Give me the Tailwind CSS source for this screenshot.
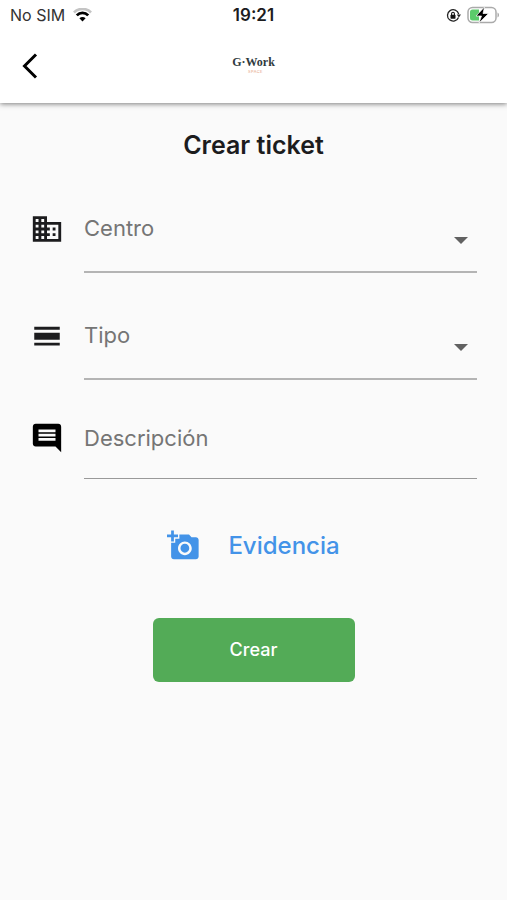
<!DOCTYPE html>
<html lang="es">
<head>
<meta charset="utf-8">
<meta name="viewport" content="width=device-width, initial-scale=1">
<title>Crear ticket</title>
<script src="https://cdn.jsdelivr.net/npm/@tailwindcss/browser@4"></script>
</head>
<body class="min-h-screen bg-[#fafafa] font-['Inter',sans-serif] text-[#1c1c1e]">
<header class="relative bg-white shadow-[0_1px_5px_rgba(0,0,0,0.5)]">
  <div class="grid h-[30px] grid-cols-3 items-center px-[10px]">
    <div class="flex items-center gap-2 text-base text-[#333]">
      <span>No SIM</span>
      <svg class="h-[14px] w-[19px]" viewBox="0 0 19 14" fill="none" aria-label="Wi-Fi">
        <path d="M1 4.500C5.500-.3 13.500-.3 18 4.500" stroke="#c4c4c4" stroke-width="2.600"/>
        <path d="M3.800 7.400C7 4 12 4 15.200 7.400" stroke="#000" stroke-width="2.800"/>
        <path d="M9.500 13.500 6.400 10.300C8.200 8.600 10.800 8.600 12.600 10.300Z" fill="#000"/>
      </svg>
    </div>
    <time class="text-center text-[17px] leading-6 font-semibold">19:21</time>
    <div class="flex items-center justify-end gap-[6px] -mr-[3px]">
      <svg class="size-[15px]" viewBox="0 0 15 15" fill="none" aria-label="Bloqueo de rotación">
        <path d="M12.500 9.500A5.700 5.700 0 1 1 12.700 6" stroke="#222" stroke-width="1.300"/>
        <path d="M10.800 6.500h4.200L12.900 9.500Z" fill="#222"/>
        <rect x="4.500" y="6.800" width="5" height="3.900" rx=".6" fill="#111"/>
        <path d="M5.600 7V5.700a1.400 1.400 0 0 1 2.800 0V7" stroke="#111" stroke-width="1.100"/>
      </svg>
      <svg class="h-[18px] w-[33px]" viewBox="0 0 33 18" aria-label="Batería cargando">
        <rect x="1" y="1.500" width="28" height="15" rx="4.500" fill="#fff" stroke="#aaa" stroke-width="1.500"/>
        <path d="M5.500 3.500H12v11H5.500a2.500 2.500 0 0 1-2.500-2.500V6a2.500 2.500 0 0 1 2.500-2.500Z" fill="#5bcb6b"/>
        <path d="M30.500 6.500c2 .8 2 4.200 0 5Z" fill="#aaa"/>
        <path d="M17.500 1 9 10h5.500L12 17l9.500-9.500H16Z" fill="#000" stroke="#fff" stroke-width=".7"/>
      </svg>
    </div>
  </div>
  <div class="grid h-[73px] grid-cols-3 items-center px-[14px]">
    <button type="button" aria-label="Volver" class="-mt-[2px] flex size-8 items-center justify-center">
      <svg class="h-[28px] w-[18px]" viewBox="0 0 18 28" fill="none" stroke="#000" stroke-width="3"><path d="M15 2.500 3.500 14 15 25.500"/></svg>
    </button>
    <div class="flex flex-col items-center pb-[5px] font-['Liberation_Serif',serif]">
      <span class="text-xs leading-[14px] font-bold text-[#2f3a40]">G·Work</span>
      <span class="pl-1 font-['Inter',sans-serif] text-[4px] leading-[5px] tracking-widest text-[#e5a585]">SPACE</span>
    </div>
  </div>
</header>
<main class="px-[30px] pt-[26px]">
  <h1 class="text-center text-[25px] leading-8 font-semibold">Crear ticket</h1>
  <form>
    <div class="mt-8 flex gap-5">
      <label for="centro" class="mt-[19px] shrink-0" aria-label="Centro">
        <svg class="size-[34px]" viewBox="0 0 24 24" fill="#1c1c1e"><path d="M12 7V3H2v18h20V7H12zM6 19H4v-2h2v2zm0-4H4v-2h2v2zm0-4H4V9h2v2zm0-4H4V5h2v2zm4 12H8v-2h2v2zm0-4H8v-2h2v2zm0-4H8V9h2v2zm0-4H8V5h2v2zm10 12h-8v-2h2v-2h-2v-2h2v-2h-2V9h8v10zm-2-8h-2v2h2v-2zm0 4h-2v2h2v-2z"/></svg>
      </label>
      <div class="relative flex-1">
        <select id="centro" class="h-[80px] w-full appearance-none border-b-2 border-[#b4b4b4] bg-transparent pb-[8px] text-[22px] text-[#757575] outline-none"><option>Centro</option></select>
        <svg class="pointer-events-none absolute right-[9px] bottom-[29px] h-[7px] w-[14px]" viewBox="0 0 14 7" fill="#616161"><path d="M0 0h14L7 7Z"/></svg>
      </div>
    </div>
    <div class="mt-[27px] flex gap-5">
      <label for="tipo" class="mt-[19px] shrink-0" aria-label="Tipo">
        <svg class="size-[34px]" viewBox="0 0 24 24" fill="#1c1c1e"><path d="M3 5.500h18v2H3zM3 9.700h18v4.900H3zM3 16.700h18v2H3z"/></svg>
      </label>
      <div class="relative flex-1">
        <select id="tipo" class="h-[80px] w-full appearance-none border-b-2 border-[#b4b4b4] bg-transparent pb-[8px] text-[22px] text-[#757575] outline-none"><option>Tipo</option></select>
        <svg class="pointer-events-none absolute right-[9px] bottom-[29px] h-[7px] w-[14px]" viewBox="0 0 14 7" fill="#616161"><path d="M0 0h14L7 7Z"/></svg>
      </div>
    </div>
    <div class="mt-[17px] flex items-center gap-5">
      <label for="descripcion" class="shrink-0" aria-label="Descripción">
        <svg class="size-[34px]" viewBox="0 0 24 24" fill="#000"><path d="M21.990 4c0-1.100-.89-2-1.990-2H4c-1.100 0-2 .9-2 2v12c0 1.100.9 2 2 2h14l4 4-.01-18zM18 14H6v-2h12v2zm0-3H6V9h12v2zm0-3H6V6h12v2z"/></svg>
      </label>
      <input id="descripcion" type="text" placeholder="Descripción" class="h-[82px] min-w-0 flex-1 border-b border-[#999] bg-transparent text-[22px] text-[#333] outline-none placeholder:text-[#757575]">
    </div>
    <div class="mt-[50px] flex justify-center">
      <button type="button" class="flex items-center gap-7 text-2xl font-medium text-[#4393e8]">
        <svg class="size-[33px]" viewBox="0 0 24 24" fill="currentColor" aria-hidden="true"><path d="M3 4V1h2v3h3v2H5v3H3V6H0V4h3zm3 6V7h3V4h7l1.830 2H21c1.100 0 2 .9 2 2v12c0 1.100-.9 2-2 2H5c-1.100 0-2-.9-2-2V10h3zm7 9c2.760 0 5-2.240 5-5s-2.240-5-5-5-5 2.240-5 5 2.240 5 5 5zm-3.200-5c0 1.770 1.430 3.200 3.200 3.200s3.200-1.430 3.200-3.200-1.430-3.200-3.200-3.200-3.200 1.430-3.200 3.200z"/></svg>
        <span>Evidencia</span>
      </button>
    </div>
    <div class="mt-14 flex justify-center">
      <button type="submit" class="h-16 w-[202px] rounded-md bg-[#53ab57] text-lg font-medium text-white">Crear</button>
    </div>
  </form>
</main>
</body>
</html>
